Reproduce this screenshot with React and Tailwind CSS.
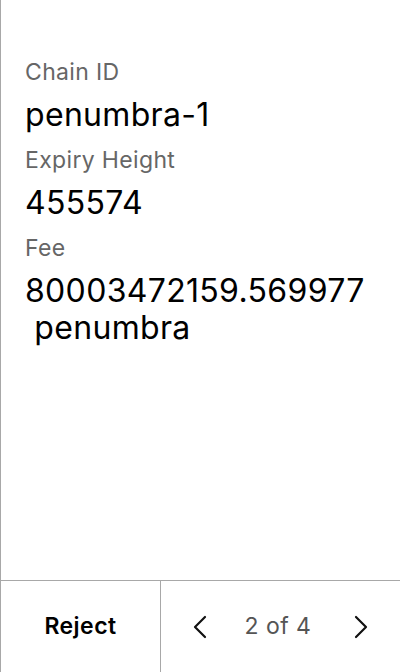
import React from "react";

const fields = [
  { label: "Chain ID", value: ["penumbra-1"] },
  { label: "Expiry Height", value: ["455574"] },
  { label: "Fee", value: ["80003472159.569977", "\u00a0penumbra"] },
];

function Chevron({ dir }) {
  const pts = dir === "left" ? "12,2 2,12 12,22" : "2,2 12,12 2,22";
  return (
    <svg width="14" height="24" viewBox="0 0 14 24" fill="none" stroke="#111" strokeWidth="2.2" strokeLinecap="round" strokeLinejoin="round">
      <polyline points={pts} />
    </svg>
  );
}

export default function App() {
  return (
    <div className="h-[672px] w-[400px] flex flex-col bg-white border-l border-[#a8a8a8] font-['Inter',sans-serif] overflow-hidden">
      {/* fields */}
      <div className="flex-1 flex flex-col gap-[13px] pt-[58px] pl-6 pr-3">
        {fields.map((f) => (
          <div key={f.label} className="flex flex-col gap-[10px]">
            <div className="text-[23px] leading-[28px] tracking-[0.015em] text-[#666666]">{f.label}</div>
            <div className="flex flex-wrap text-[32px] leading-[37px] tracking-[0.01em] text-black">
              {f.value.map((v) => (
                <span key={v}>{v}</span>
              ))}
            </div>
          </div>
        ))}
      </div>

      {/* footer */}
      <div className="h-[92px] flex border-t border-[#a8a8a8]">
        <button className="w-[160px] border-r border-[#a8a8a8] flex items-center justify-center text-[23px] tracking-[0.02em] font-semibold text-black">
          Reject
        </button>
        <div className="flex-1 flex items-center justify-center">
          <button className="flex items-center mr-[38px]"><Chevron dir="left" /></button>
          <span className="text-[23px] tracking-[0.02em] text-[#555555]">2 of 4</span>
          <button className="flex items-center ml-[43px]"><Chevron dir="right" /></button>
        </div>
      </div>
    </div>
  );
}
